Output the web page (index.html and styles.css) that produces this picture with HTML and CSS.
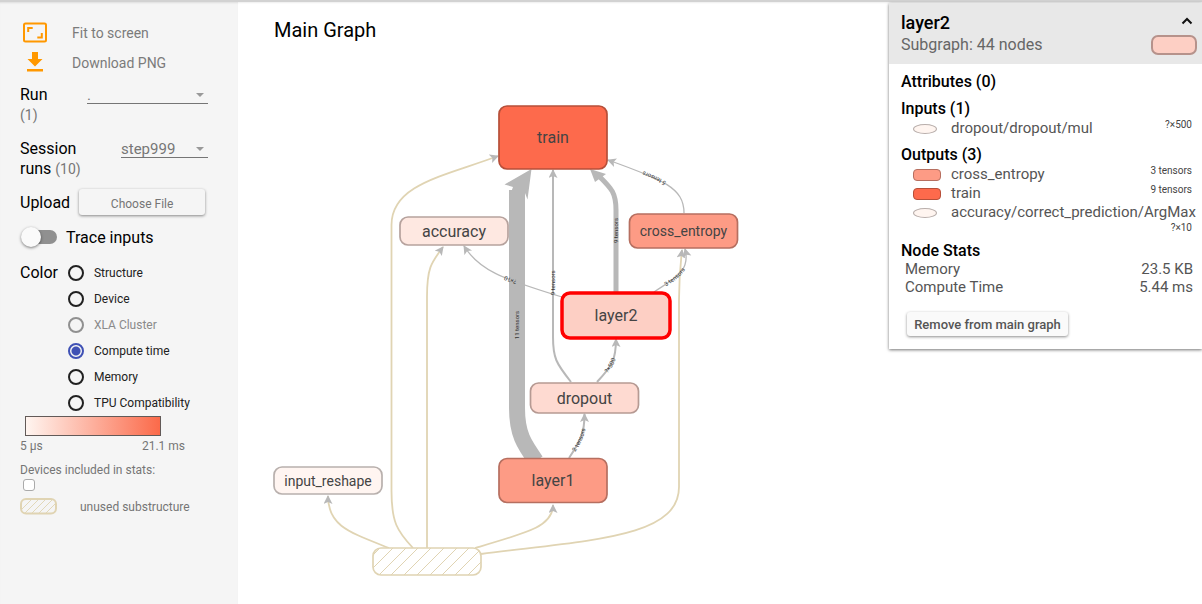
FILE: index.html
```html
<!DOCTYPE html>
<html lang="en">
<head>
<meta charset="utf-8">
<title>Main Graph</title>
<link rel="stylesheet" href="styles.css">
</head>
<body>
<div class="app">
  <aside class="sidebar">
    <button class="action" type="button">
      <svg class="action-icon" width="30" height="30" viewBox="0 0 30 30" aria-hidden="true"><rect x="4" y="5.500" width="22" height="18" rx="1.500" fill="none" stroke="#ff9800" stroke-width="2"/><path d="M8.200 14v-4h4.500M21.800 15v4.500h-4.500" fill="none" stroke="#ff9800" stroke-width="2"/></svg>
      Fit to screen
    </button>
    <button class="action" type="button">
      <svg class="action-icon" width="30" height="30" viewBox="0 0 30 30" aria-hidden="true"><path d="M12 4h6v7h4.500L15 18.500 7.500 11H12zM7 21h16v2.500H7z" fill="#ff9800"/></svg>
      Download PNG
    </button>

    <div class="field run">
      <label for="run">Run <span class="count">(1)</span></label>
      <div class="select-box wide"><select id="run"><option>.</option></select></div>
    </div>
    <div class="field session">
      <label for="session">Session runs <span class="count">(10)</span></label>
      <div class="select-box narrow"><select id="session"><option>step999</option></select></div>
    </div>
    <div class="upload">
      <span>Upload</span>
      <button class="raised choose" type="button">Choose File</button>
    </div>
    <label class="trace"><input class="toggle" type="checkbox">Trace inputs</label>

    <div class="color">
      <span class="color-title">Color</span>
      <div class="options">
        <label><input type="radio" name="color">Structure</label>
        <label><input type="radio" name="color">Device</label>
        <label class="off"><input type="radio" name="color" disabled>XLA Cluster</label>
        <label><input type="radio" name="color" checked>Compute time</label>
        <label><input type="radio" name="color">Memory</label>
        <label><input type="radio" name="color">TPU Compatibility</label>
      </div>
    </div>
    <div class="scale"></div>
    <div class="scale-ends"><span>5 µs</span><span>21.1 ms</span></div>
    <label class="devices">Devices included in stats:<input type="checkbox"></label>
    <div class="legend">
      <svg width="38" height="17" viewBox="0 0 38 17" aria-hidden="true"><clipPath id="legend-clip"><rect x="1" y="1" width="35" height="15" rx="5"/></clipPath><path clip-path="url(#legend-clip)" d="M-3 16L12 1M4 16L19 1M11 16L26 1M18 16L33 1M25 16L40 1M32 16L47 1" stroke="#e2d8b8" fill="none"/><rect x="1" y="1" width="35" height="14.500" rx="5" fill="none" stroke="#e0d4b3" stroke-width="2"/></svg>
      <span>unused substructure</span>
    </div>
  </aside>

  <main class="stage">
    <h1>Main Graph</h1>
    <svg class="graph" role="img" aria-label="Main Graph">
      <defs>
        <marker id="arrow" markerUnits="userSpaceOnUse" markerWidth="10" markerHeight="10" refX="8" refY="4.500" orient="auto"><path d="M0 0L9 4.500L0 9L2 4.500Z" fill="#b8b8b8"/></marker>
        <clipPath id="unused-clip"><rect x="373" y="548" width="108" height="27" rx="8"/></clipPath>
      </defs>
      <g transform="translate(-238 0)">
        <g class="edge unused">
          <path d="M413 548C397 531 391.500 522 391.500 491V225C391.500 184 445 176 498 156"/>
          <path d="M427 548V297C427 268 431 263 443 247"/>
          <path d="M389 548C349 532 328 526 328 496"/>
          <path d="M475 548C530 532 553 526 553 505"/>
          <path d="M481 554C590 540 679 538 679 487V300Q679 276 682 250"/>
        </g>
        <g class="edge">
          <path class="thick" d="M536 461C524 444 517 434 517 408V190"/>
          <path class="head" d="M531.500 169L504.500 184.500L513 187L509 198V205H525V193L527.500 199.500Z"/>
          <path id="e-dropout-train" class="w2" d="M571 382C556 363 553 358 553 337V170"/>
          <path id="e-layer2-train" class="w5" d="M616 292V210C616 192 611 188 598 175"/>
          <path class="head" d="M590 169L606 174L595 182Z"/>
          <path id="e-cross-train" d="M684 213C684 188 664 180 608 160"/>
          <path id="e-layer2-accuracy" d="M562 297C500 278 479 270 464 246"/>
          <path id="e-layer2-cross" d="M654 292C673 279 691 272 685 249"/>
          <path id="e-dropout-layer2" class="w2" d="M597 382C612 366 616 360 616 339"/>
          <path id="e-layer1-dropout" class="w2" d="M569 458C581 440 584.500 433 584.500 414"/>
        </g>
        <path id="t-layer1-train" d="M517 458V192" fill="none"/>
        <g class="edge-text">
          <text dy="2"><textPath href="#t-layer1-train" startOffset="50%">11 tensors</textPath></text>
          <text dy="2"><textPath href="#e-dropout-train" startOffset="48%">9 tensors</textPath></text>
          <text dy="2"><textPath href="#e-layer2-train" startOffset="50%">9 tensors</textPath></text>
          <text dy="2"><textPath href="#e-cross-train" startOffset="50%">5 tensors</textPath></text>
          <text dy="2"><textPath href="#e-layer2-accuracy" startOffset="48%">?×10</textPath></text>
          <text dy="2"><textPath href="#e-layer2-cross" startOffset="44%">3 tensors</textPath></text>
          <text dy="2"><textPath href="#e-dropout-layer2" startOffset="44%">?×500</textPath></text>
          <text dy="2"><textPath href="#e-layer1-dropout" startOffset="44%">2 tensors</textPath></text>
        </g>
        <g class="node">
          <rect x="499" y="106" width="108" height="63" rx="8" fill="#fd6a4c" stroke="#b64f39"/><text x="553" y="143">train</text>
          <rect x="400" y="217" width="108" height="28" rx="8" fill="#fee8e1" stroke="#b6a29d"/><text x="454" y="237">accuracy</text>
          <rect x="629.500" y="214" width="108" height="34" rx="8" fill="#fd9b85" stroke="#b66f60"/><text class="small" x="683.500" y="236">cross_entropy</text>
          <rect x="562" y="293" width="108" height="45" rx="8" fill="#fdcfc4" stroke="#ff0000" class="selected"/><text x="616" y="321">layer2</text>
          <rect x="530.500" y="383" width="108" height="30" rx="8" fill="#fedad1" stroke="#b69a93"/><text x="584.500" y="404">dropout</text>
          <rect x="499" y="458.500" width="108" height="44" rx="8" fill="#fd9b85" stroke="#b66f60"/><text x="553" y="486">layer1</text>
          <rect x="274" y="467" width="108" height="27" rx="8" fill="#fff5f1" stroke="#b8b0ad"/><text class="small" x="328" y="486">input_reshape</text>
          <rect x="373" y="548" width="108" height="27" rx="8" fill="#fff" stroke="#e0d4b3"/>
        </g>
        <path clip-path="url(#unused-clip)" d="M353 575L380 548M366 575L393 548M379 575L406 548M391 575L418 548M404 575L431 548M417 575L444 548M430 575L457 548M442 575L469 548M455 575L482 548M468 575L495 548" stroke="#e0d4b3" fill="none"/>
      </g>
    </svg>

    <section class="info">
      <header class="info-head">
        <div><h2>layer2</h2><p>Subgraph: 44 nodes</p></div>
        <div class="info-side">
          <button class="collapse" type="button" aria-label="Collapse"><svg width="12" height="8" viewBox="0 0 12 8"><path d="M1.500 6.500L6 2L10.500 6.500" fill="none" stroke="#111" stroke-width="2"/></svg></button>
          <span class="swatch"></span>
        </div>
      </header>
      <div class="info-body">
        <h3>Attributes (0)</h3>
        <h3>Inputs (1)</h3>
        <ul>
          <li><span class="oval"></span><span class="name">dropout/dropout/mul</span><small>?×500</small></li>
        </ul>
        <h3>Outputs (3)</h3>
        <ul>
          <li><span class="pill mid"></span><span class="name">cross_entropy</span><small>3 tensors</small></li>
          <li><span class="pill hot"></span><span class="name">train</span><small>9 tensors</small></li>
          <li class="wrap"><span class="oval"></span><span class="name">accuracy/correct_prediction/ArgMax</span><small>?×10</small></li>
        </ul>
        <h3>Node Stats</h3>
        <table class="stats">
          <tr><th scope="row">Memory</th><td>23.5 KB</td></tr>
          <tr><th scope="row">Compute Time</th><td>5.44 ms</td></tr>
        </table>
        <button class="raised remove" type="button">Remove from main graph</button>
      </div>
    </section>
  </main>
</div>
</body>
</html>
```
FILE: styles.css
```css
* { box-sizing: border-box; }
body { margin: 0; font-family: Roboto, "Liberation Sans", sans-serif; color: #000; background: #fff; }
button, select, input { font: inherit; margin: 0; }
h1, h2, h3, p, ul { margin: 0; padding: 0; list-style: none; }

.app { display: flex; min-height: 100vh; border-top: 2px solid #d2d2d2; }
.sidebar { width: 238px; flex: none; background: #f5f5f5; padding: 16px 20px; font-size: 16px; box-shadow: inset 0 2px 2px -1px #ddd; }

.action { display: flex; align-items: center; gap: 22px; height: 30px; padding: 0; border: 0; background: none; color: #7b7b7b; font-size: 14px; }
.field { display: flex; justify-content: space-between; width: 188px; line-height: 20px; }
.count { color: #777; font-size: 14px; line-height: 16px; }
.run { margin-top: 7px; }
.run label { width: 40px; }
.session { margin-top: 14px; }
.session label { width: 70px; }
.select-box { height: 19px; position: relative; border-bottom: 1px solid #757575; }
.select-box::after { content: ""; position: absolute; right: 4px; top: 8px; border: 4px solid transparent; border-top-color: #999; border-bottom: 0; }
.wide { width: 121px; }
.narrow { width: 87px; }
.select-box select { width: 100%; height: 19px; appearance: none; border: 0; padding: 0; background: none; color: #777; font-size: 15px; }
.upload { display: flex; align-items: center; gap: 9px; margin-top: 10px; }
.raised { border: 0; border-radius: 3px; box-shadow: 0 1px 3px rgba(0, 0, 0, .45); }
.choose { width: 126px; height: 26px; background: #f5f5f5; color: #757575; font-size: 12px; padding: 3px 0 0; }
.trace { display: flex; align-items: center; gap: 9px; margin-top: 11px; height: 22px; }
.toggle { appearance: none; width: 37px; height: 14px; border-radius: 7px; background: linear-gradient(90deg, transparent 8px, #909090 8px); position: relative; }
.toggle::before { content: ""; position: absolute; left: 1px; top: -3px; width: 20px; height: 20px; border-radius: 50%; background: #fafafa; box-shadow: 0 1px 3px rgba(0, 0, 0, .5); }

.color { display: flex; gap: 10px; margin-top: 12px; }
.color-title { line-height: 26px; }
.options { display: flex; flex-direction: column; font-size: 12px; color: #212121; }
.options label { display: flex; align-items: center; gap: 10px; height: 26px; }
.options input { appearance: none; width: 16px; height: 16px; border: 2px solid #212121; border-radius: 50%; }
.options .off { color: #8a8a8a; }
.options .off input { border-color: #909090; }
.options input:checked { border-color: #3f51b5; background: radial-gradient(circle, #3f51b5 4px, transparent 5px); }
.scale { width: 136px; height: 20px; margin-left: 5px; border: 1px solid #625a58; background: linear-gradient(90deg, #fff5f0, #fb6a4a); }
.scale-ends { display: flex; justify-content: space-between; width: 165px; margin-top: 2px; line-height: 16px; font-size: 12px; color: #757575; }
.devices { display: flex; flex-direction: column; gap: 1px; margin-top: 8px; line-height: 16px; font-size: 12px; color: #757575; }
.devices input { appearance: none; width: 12px; height: 12px; margin-left: 3px; border: 1px solid #aaa; border-radius: 3px; background: #fff; }
.legend { display: flex; align-items: center; gap: 22px; margin-top: 7px; font-size: 12px; color: #757575; }

.stage { flex: 1; min-width: 0; position: relative; display: grid; box-shadow: inset 0 2px 2px -1px #eee; }
.stage h1 { grid-area: 1 / 1; padding: 16px 36px; font-size: 20px; line-height: 24px; font-weight: 400; }
.graph { grid-area: 1 / 1; width: 100%; height: 100%; margin-top: -2px; }
.edge path { fill: none; stroke: #b8b8b8; stroke-width: 1.3; marker-end: url(#arrow); }
.unused path { stroke: #e0d4b3; stroke-width: 1.8; }
.edge .w2 { stroke-width: 2; }
.edge .w5 { stroke-width: 5; marker-end: none; }
.edge .thick { stroke-width: 16; marker-end: none; }
.edge .head { fill: #b8b8b8; stroke: none; marker-end: none; }
.edge-text { font-size: 6px; fill: #333; text-anchor: middle; }
.node rect { stroke-width: 1.7; }
.node .selected { stroke-width: 3.5; }
.node text { font-size: 16px; fill: #444; text-anchor: middle; }
.node .small { font-size: 14px; }

.info { position: absolute; top: 1px; right: 0; width: 313px; background: #fff; box-shadow: 0 1px 3px rgba(0, 0, 0, .55); }
.info-head { display: flex; justify-content: space-between; height: 61px; padding: 9px 5px 0 12px; background: #e8e8e8; }
.info-head h2 { font-size: 18px; line-height: 22px; font-weight: 500; }
.info-head p { font-size: 16px; line-height: 22px; color: #666; }
.info-side { display: flex; flex-direction: column; align-items: flex-end; gap: 10px; padding-top: 5px; }
.collapse { display: flex; border: 0; padding: 0 4px 0 0; background: none; }
.swatch { width: 46px; height: 20px; border: 2px solid #b6928b; border-radius: 7px; background: #fdcfc4; }
.info-body { padding: 8px 10px 13px 12px; }
.info-body h3 { font-size: 16px; line-height: 19px; font-weight: 500; margin-bottom: 8px; }
.info-body ul { margin: -8px 0 7px 12px; padding-top: 1px; }
.info-body li { display: grid; grid-template-columns: 28px minmax(0, auto) 1fr; column-gap: 10px; align-items: center; line-height: 19px; font-size: 15px; color: #555; }
.info-body small { font-size: 10px; line-height: 12px; align-self: start; text-align: right; color: #444; }
.info-body .wrap { grid-template-columns: 28px 1fr; }
.info-body .wrap .name { min-width: 0; white-space: nowrap; }
.info-body .wrap small { grid-column: 1 / -1; }
.oval { width: 24px; height: 10px; border: 1px solid #b8aeab; border-radius: 50%; background: #fff5f0; }
.pill { width: 28px; height: 12px; border: 1px solid #b66f60; border-radius: 4px; background: #fd9b85; }
.hot { background: #fd6a4c; border-color: #b64f39; }
.stats { width: 288px; margin: -8px 0 16px 4px; border-collapse: collapse; font-size: 15px; line-height: 18px; color: #555; }
.stats th, .stats td { padding: 0; font-weight: 400; text-align: left; }
.stats td { text-align: right; }
.remove { margin-left: 6px; width: 161px; height: 24px; padding: 0; background: #fafafa; color: #555; font-size: 13px; font-weight: 500; }
```
